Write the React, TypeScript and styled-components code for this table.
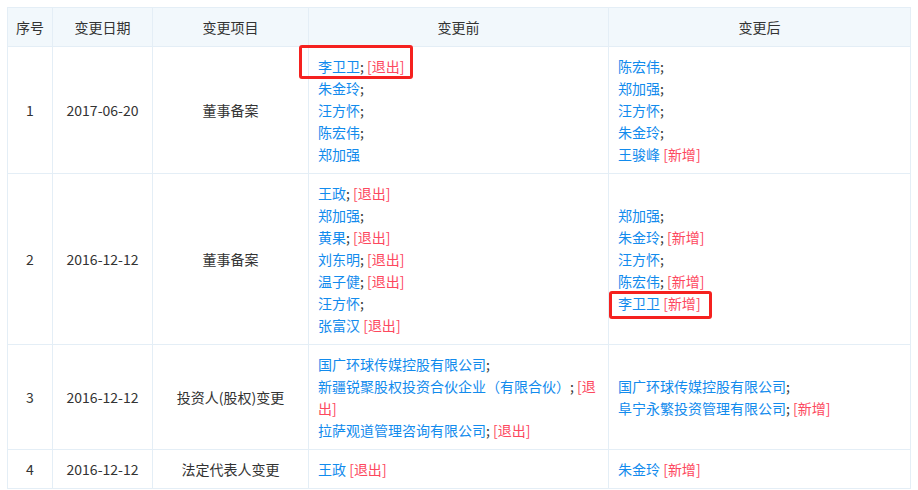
import React from "react";
import styled, { createGlobalStyle } from "styled-components";

const Global = createGlobalStyle`
  html, body { margin: 0; padding: 0; background: #fff; }
  body { padding: 7px; font-family: "Noto Sans CJK SC", "Microsoft YaHei", sans-serif; }
`;

const Table = styled.table`
  width: 904px;
  border-collapse: collapse;
  table-layout: fixed;
  font-size: 14px;
  line-height: 22px;
  color: #333;
`;

const Th = styled.th`
  background: #f2f8fc;
  border: 1px solid #e4eef6;
  padding: 8px 2px;
  font-weight: normal;
  text-align: center;
  color: #333;
  white-space: nowrap;
`;

const Td = styled.td<{ $left?: boolean }>`
  border: 1px solid #e4eef6;
  padding: ${(p) => (p.$left ? "8px 10px 8px 9px" : "8px 2px")};
  text-align: ${(p) => (p.$left ? "left" : "center")};
  vertical-align: middle;
`;

const Line = styled.div`
  position: relative;
`;

const Name = styled.span`
  color: #128bed;
`;

const Tag = styled.span`
  color: #fd485e;
`;

const Highlight = styled.span<{ $t: number; $l: number; $w: number; $h: number }>`
  position: absolute;
  top: ${(p) => p.$t}px;
  left: ${(p) => p.$l}px;
  width: ${(p) => p.$w}px;
  height: ${(p) => p.$h}px;
  border: 3px solid #f5211f;
  border-radius: 3px;
  box-sizing: border-box;
  pointer-events: none;
`;

type Entry = {
  n: string;
  sep?: boolean;
  tag?: string;
  hl?: { t: number; l: number; w: number; h: number };
};

type Row = {
  no: number;
  date: string;
  item: string;
  before: Entry[];
  after: Entry[];
};

const rows: Row[] = [
  {
    no: 1,
    date: "2017-06-20",
    item: "董事备案",
    before: [
      { n: "李卫卫", sep: true, tag: "退出", hl: { t: -10, l: -19, w: 114, h: 34 } },
      { n: "朱金玲", sep: true },
      { n: "汪方怀", sep: true },
      { n: "陈宏伟", sep: true },
      { n: "郑加强" },
    ],
    after: [
      { n: "陈宏伟", sep: true },
      { n: "郑加强", sep: true },
      { n: "汪方怀", sep: true },
      { n: "朱金玲", sep: true },
      { n: "王骏峰", tag: "新增" },
    ],
  },
  {
    no: 2,
    date: "2016-12-12",
    item: "董事备案",
    before: [
      { n: "王政", sep: true, tag: "退出" },
      { n: "郑加强", sep: true },
      { n: "黄果", sep: true, tag: "退出" },
      { n: "刘东明", sep: true, tag: "退出" },
      { n: "温子健", sep: true, tag: "退出" },
      { n: "汪方怀", sep: true },
      { n: "张富汉", tag: "退出" },
    ],
    after: [
      { n: "郑加强", sep: true },
      { n: "朱金玲", sep: true, tag: "新增" },
      { n: "汪方怀", sep: true },
      { n: "陈宏伟", sep: true, tag: "新增" },
      { n: "李卫卫", tag: "新增", hl: { t: -1, l: -9, w: 103, h: 28 } },
    ],
  },
  {
    no: 3,
    date: "2016-12-12",
    item: "投资人(股权)变更",
    before: [
      { n: "国广环球传媒控股有限公司", sep: true },
      { n: "新疆锐聚股权投资合伙企业（有限合伙）", sep: true, tag: "退出" },
      { n: "拉萨观道管理咨询有限公司", sep: true, tag: "退出" },
    ],
    after: [
      { n: "国广环球传媒控股有限公司", sep: true },
      { n: "阜宁永繁投资管理有限公司", sep: true, tag: "新增" },
    ],
  },
  {
    no: 4,
    date: "2016-12-12",
    item: "法定代表人变更",
    before: [{ n: "王政", tag: "退出" }],
    after: [{ n: "朱金玲", tag: "新增" }],
  },
];

function EntryLine({ e }: { e: Entry }) {
  return (
    <Line>
      <Name>{e.n}</Name>
      {e.sep ? ";" : ""}
      {e.tag ? " " : ""}
      {e.tag && <Tag>[{e.tag}]</Tag>}
      {e.hl && <Highlight $t={e.hl.t} $l={e.hl.l} $w={e.hl.w} $h={e.hl.h} />}
    </Line>
  );
}

export default function App() {
  return (
    <>
      <Global />
      <Table>
        <colgroup>
          <col style={{ width: 45 }} />
          <col style={{ width: 100 }} />
          <col style={{ width: 156 }} />
          <col style={{ width: 300 }} />
          <col style={{ width: 302 }} />
        </colgroup>
        <thead>
          <tr>
            <Th>序号</Th>
            <Th>变更日期</Th>
            <Th>变更项目</Th>
            <Th>变更前</Th>
            <Th>变更后</Th>
          </tr>
        </thead>
        <tbody>
          {rows.map((r) => (
            <tr key={r.no}>
              <Td>{r.no}</Td>
              <Td>{r.date}</Td>
              <Td>{r.item}</Td>
              <Td $left>
                {r.before.map((e, i) => (
                  <EntryLine key={i} e={e} />
                ))}
              </Td>
              <Td $left>
                {r.after.map((e, i) => (
                  <EntryLine key={i} e={e} />
                ))}
              </Td>
            </tr>
          ))}
        </tbody>
      </Table>
    </>
  );
}
